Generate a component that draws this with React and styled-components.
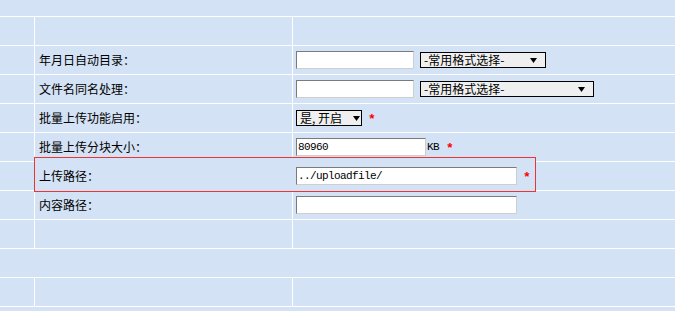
import React from 'react'
import styled, { createGlobalStyle } from 'styled-components'

const Global = createGlobalStyle`
  html, body {
    margin: 0;
    padding: 0;
    overflow: hidden;
    background: #d3e2f4;
  }
  body {
    font-family: "Noto Sans CJK SC", "Liberation Sans", sans-serif;
    font-size: 12px;
    color: #000;
  }
`

const Grid = styled.div`
  display: grid;
  width: 675px;
  grid-template-columns: 34px 257px 1fr;
  grid-auto-rows: 28px;
  grid-template-rows: 16px;
  gap: 1px;
  background: #fff;
`

const Cell = styled.div`
  background: #d3e2f4;
  grid-column: ${p => (p.$span ? '1 / -1' : 'auto')};
`

const LabelCell = styled(Cell)`
  position: relative;
  display: flex;
  align-items: center;
  padding-left: 4px;
`

const LabelText = styled.span`
  position: relative;
  z-index: 2;
  line-height: 14px;
`

const ValueCell = styled(Cell)`
  display: flex;
  align-items: center;
  padding-left: 3px;
`

// red frame drawn over the grid lines around the active row
const Highlight = styled.div`
  position: absolute;
  z-index: 1;
  left: -1px;
  top: -5px;
  width: 502px;
  height: 35px;
  background: #d3e2f4;
  box-shadow: inset 0 0 0 1px #ee3333;
`

const TextInput = styled.input`
  position: relative;
  z-index: 2;
  box-sizing: border-box;
  width: ${p => p.$w}px;
  height: 18px;
  margin: 0;
  padding: 0 1px;
  border: 1px solid;
  border-color: #7b7b7b #cfcfcf #cfcfcf #7b7b7b;
  background: #fff;
  font-family: "Liberation Mono", monospace;
  font-size: 11px;
  letter-spacing: -0.6px;
  color: #000;
  outline: none;
`

const SelectBox = styled.div`
  position: relative;
  box-sizing: border-box;
  display: flex;
  align-items: center;
  justify-content: space-between;
  width: ${p => p.$w}px;
  height: 16px;
  margin-left: ${p => p.$ml || 0}px;
  padding: 0 ${p => p.$pr}px 0 3px;
  border: 1px solid #000;
  background: #efefef;
  line-height: 14px;
  white-space: nowrap;
`

const Unit = styled.span`
  position: relative;
  margin-left: 1px;
  font-family: "Liberation Mono", monospace;
  font-size: 11px;
  letter-spacing: -0.6px;
`

const Star = styled.span`
  position: relative;
  z-index: 2;
  margin-left: ${p => p.$ml}px;
  color: #f00;
  font-family: "Liberation Mono", monospace;
  font-size: 13px;
  font-weight: bold;
  line-height: 10px;
  top: 2px;
`

const Arrow = () => (
  <svg width="7" height="5" viewBox="0 0 7 5">
    <polygon points="0,0 7,0 3.5,5" fill="#000" />
  </svg>
)

const Select = ({ w, ml, pr, children }) => (
  <SelectBox $w={w} $ml={ml} $pr={pr}>
    <span>{children}</span>
    <Arrow />
  </SelectBox>
)

const Row = ({ label, children, highlight }) => (
  <>
    <Cell />
    <LabelCell>
      {highlight && <Highlight />}
      <LabelText>{label}</LabelText>
    </LabelCell>
    <ValueCell>{children}</ValueCell>
  </>
)

const EmptyRow = () => (
  <>
    <Cell />
    <Cell />
    <Cell />
  </>
)

export default function App() {
  return (
    <>
      <Global />
      <Grid>
        <Cell $span />
        <EmptyRow />
        <Row label="年月日自动目录：">
          <TextInput $w={118} defaultValue="" />
          <Select w={126} ml={6} pr={8}>-常用格式选择-</Select>
        </Row>
        <Row label="文件名同名处理：">
          <TextInput $w={118} defaultValue="" />
          <Select w={174} ml={6} pr={8}>-常用格式选择-</Select>
        </Row>
        <Row label="批量上传功能启用：">
          <Select w={66} pr={1}>是, 开启</Select>
          <Star $ml={6}>*</Star>
        </Row>
        <Row label="批量上传分块大小：">
          <TextInput $w={130} defaultValue="80960" />
          <Unit>KB</Unit>
          <Star $ml={7}>*</Star>
        </Row>
        <Row label="上传路径：" highlight>
          <TextInput $w={221} defaultValue="../uploadfile/" />
          <Star $ml={6}>*</Star>
        </Row>
        <Row label="内容路径：">
          <TextInput $w={221} defaultValue="" />
        </Row>
        <EmptyRow />
        <Cell $span />
        <EmptyRow />
        <Cell $span />
      </Grid>
    </>
  )
}
